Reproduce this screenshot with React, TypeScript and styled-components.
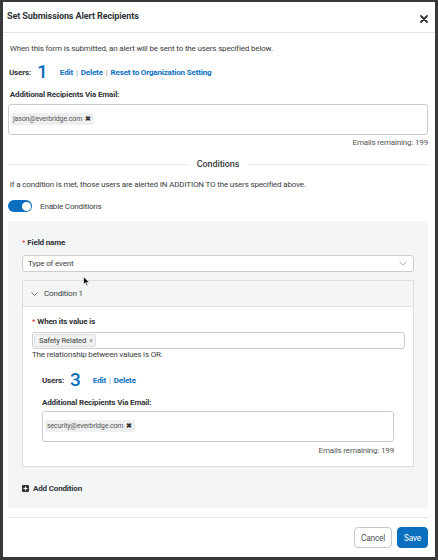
import React from "react";
import styled, { createGlobalStyle } from "styled-components";

const Global = createGlobalStyle`
  html, body { margin: 0; padding: 0; background: #fff; }
  body { font-family: Roboto, "Liberation Sans", Arial, sans-serif; color: #333; }
  * { box-sizing: border-box; }
`;

const Frame = styled.div`
  position: relative;
  width: 438px;
  height: 560px;
  border: 3px solid #37393b;
  border-top-width: 2px;
  background: #fff;
  display: flex;
  flex-direction: column;
  overflow: hidden;
`;

const Header = styled.div`
  height: 31px;
  flex: none;
  display: flex;
  align-items: center;
  justify-content: space-between;
  padding: 0 7px 0 4px;
  border-bottom: 1px solid #dfe3e6;
`;

const Title = styled.div`
  font-size: 9px;
  letter-spacing: -0.1px;
  font-weight: 700;
  color: #2f3337;
  margin-top: -2px;
`;

const Close = styled.svg`
  width: 8px;
  height: 8px;
  margin-top: 3px;
`;

const Body = styled.div`
  flex: 1;
  padding: 0 7px 0 5px;
  display: flex;
  flex-direction: column;
  font-size: 8px;
  letter-spacing: -0.16px;
`;

const Text = styled.div<{ $mt?: number; $muted?: boolean; $right?: boolean }>`
  line-height: 12px;
  height: 12px;
  white-space: nowrap;
  color: ${(p) => (p.$muted ? "#555" : "#3a3d40")};
  margin-top: ${(p) => p.$mt ?? 0}px;
  text-align: ${(p) => (p.$right ? "right" : "left")};
`;

const Label = styled.div<{ $mt?: number }>`
  line-height: 12px;
  height: 12px;
  font-weight: 700;
  color: #2f3337;
  white-space: nowrap;
  margin-top: ${(p) => p.$mt ?? 0}px;
`;

const Req = styled.span`
  color: #e0393e;
  margin-right: 2px;
  font-weight: 400;
`;

const UsersRow = styled.div<{ $mt: number; $indent?: number }>`
  height: 20px;
  display: flex;
  align-items: center;
  margin-top: ${(p) => p.$mt}px;
  padding-left: ${(p) => p.$indent ?? 0}px;
  white-space: nowrap;
`;

const UsersLabel = styled.span`
  font-weight: 700;
  color: #2f3337;
`;

const Count = styled.span`
  font-size: 19px;
  font-weight: 500;
  letter-spacing: 0;
  color: #0b6fbf;
  margin: 0 12px 0 6px;
  line-height: 20px;
`;

const Link = styled.span`
  color: #0b6fbf;
  font-weight: 700;
`;

const Sep = styled.span`
  color: #8a8f94;
  margin: 0 3px;
`;

const EmailBox = styled.div<{ $mt: number }>`
  height: 31px;
  margin-top: ${(p) => p.$mt}px;
  border: 1px solid #c9cdd1;
  border-radius: 3px;
  background: #fff;
  padding: 8px 2px;
  display: flex;
  align-items: flex-start;
`;

const Chip = styled.span`
  display: inline-flex;
  align-items: center;
  height: 12px;
  padding: 0 3px 0 2px;
  background: #eeeff0;
  border-radius: 2px;
  font-size: 7px;
  letter-spacing: -0.12px;
  color: #555;
  white-space: nowrap;
`;

const ChipX = styled.span`
  font-weight: 700;
  margin-left: 3px;
  font-size: 6.5px;
  color: #333;
`;

const Divider = styled.div`
  margin-top: 9px;
  height: 12px;
  display: flex;
  align-items: center;
  gap: 9px;
  font-size: 9px;
  letter-spacing: -0.1px;
  color: #3a3d40;
  font-weight: 500;
  &::before, &::after {
    content: "";
    flex: 1;
    height: 1px;
    background: #e6e8ea;
  }
`;

const ToggleRow = styled.div`
  margin-top: 9px;
  height: 12px;
  display: flex;
  align-items: center;
  gap: 8px;
  color: #3a3d40;
`;

const Toggle = styled.span`
  width: 24px;
  height: 12px;
  border-radius: 6px;
  background: #0b6fbf;
  position: relative;
  flex: none;
  &::after {
    content: "";
    position: absolute;
    right: 1.5px;
    top: 1.5px;
    width: 9px;
    height: 9px;
    border-radius: 50%;
    background: #fff;
  }
`;

const Panel = styled.div`
  margin-top: 9px;
  height: 287px;
  background: #f4f5f7;
  padding: 16px 14px 0 14px;
  display: flex;
  flex-direction: column;
`;

const Select = styled.div`
  margin-top: 6px;
  height: 17px;
  border: 1px solid #c9cdd1;
  border-radius: 3px;
  background: #fff;
  display: flex;
  align-items: center;
  justify-content: space-between;
  padding: 0 6px 0 5px;
  color: #3a3d40;
`;

const Card = styled.div`
  margin-top: 8px;
  border: 1px solid #dde0e3;
  background: #fff;
  display: flex;
  flex-direction: column;
`;

const CardHead = styled.div`
  height: 26px;
  background: #f4f5f7;
  border-bottom: 1px solid #dde0e3;
  display: flex;
  align-items: center;
  padding-left: 8px;
  gap: 6px;
  color: #3a3d40;
`;

const CardBody = styled.div`
  padding: 9px 8px 9px 9px;
  display: flex;
  flex-direction: column;
`;

const TagInput = styled.div`
  margin-top: 4px;
  height: 17px;
  border: 1px solid #c9cdd1;
  border-radius: 3px;
  display: flex;
  align-items: center;
  padding: 0 1px;
`;

const Tag = styled.span`
  display: inline-flex;
  align-items: center;
  height: 13px;
  padding: 0 3px 0 4px;
  background: #f1f2f3;
  border: 1px solid #dadde0;
  border-radius: 2px;
  font-size: 7.7px;
  letter-spacing: -0.15px;
  color: #3a3d40;
`;

const TagX = styled.span`
  margin-left: 3px;
  color: #777;
  font-size: 6.5px;
`;

const Indented = styled.div`
  margin: 0 11px 0 10px;
  display: flex;
  flex-direction: column;
`;

const AddRow = styled.div`
  margin-top: 15px;
  height: 12px;
  display: flex;
  align-items: center;
  gap: 4px;
  font-weight: 700;
  color: #2f3337;
`;

const Footer = styled.div`
  margin-top: 9px;
  border-top: 1px solid #e3e6e8;
  padding-top: 9px;
  display: flex;
  justify-content: flex-end;
  gap: 5px;
`;

const Button = styled.button<{ $primary?: boolean }>`
  height: 21px;
  padding: 0 6px;
  border-radius: 4px;
  font-family: Roboto, "Liberation Sans", Arial, sans-serif;
  font-size: 8.2px;
  letter-spacing: -0.15px;
  border: 1px solid ${(p) => (p.$primary ? "#0b6fbf" : "#c3c8cc")};
  background: ${(p) => (p.$primary ? "#0b6fbf" : "#fff")};
  color: ${(p) => (p.$primary ? "#fff" : "#4a4f54")};
  cursor: pointer;
`;

const Cursor = styled.svg`
  position: absolute;
  left: 80px;
  top: 274px;
  width: 7px;
  height: 11px;
  pointer-events: none;
`;

const Users = ({ n, reset, mt, indent }: { n: number; reset?: boolean; mt: number; indent?: number }) => (
  <UsersRow $mt={mt} $indent={indent}>
    <UsersLabel>Users:</UsersLabel>
    <Count>{n}</Count>
    <Link>Edit</Link>
    <Sep>|</Sep>
    <Link>Delete</Link>
    {reset && (
      <>
        <Sep>|</Sep>
        <Link>Reset to Organization Setting</Link>
      </>
    )}
  </UsersRow>
);

export default function App() {
  return (
    <>
      <Global />
      <Frame>
        <Header>
          <Title>Set Submissions Alert Recipients</Title>
          <Close viewBox="0 0 8 8">
            <path d="M1 1 L7 7 M7 1 L1 7" stroke="#2f3337" strokeWidth="1.8" strokeLinecap="round" />
          </Close>
        </Header>
        <Body>
          <Text $mt={10}>&nbsp;When this form is submitted, an alert will be sent to the users specified below.</Text>
          <Users n={1} reset mt={7} indent={1} />
          <Label $mt={7}>&nbsp;Additional Recipients Via Email:</Label>
          <EmailBox $mt={3}>
            <Chip>
              jason@everbridge.com<ChipX>✖</ChipX>
            </Chip>
          </EmailBox>
          <Text $mt={2} $right $muted>Emails remaining: 199</Text>
          <Divider>Conditions</Divider>
          <Text $mt={9}>&nbsp;If a condition is met, those users are alerted IN ADDITION TO the users specified above.</Text>
          <ToggleRow>
            <Toggle />
            Enable Conditions
          </ToggleRow>
          <Panel>
            <Label>
              <Req>*</Req>Field name
            </Label>
            <Select>
              Type of event
              <svg width="8" height="5" viewBox="0 0 8 5">
                <path d="M0.5 0.5 L4 4 L7.5 0.5" fill="none" stroke="#a0a5aa" strokeWidth="0.8" />
              </svg>
            </Select>
            <Card>
              <CardHead>
                <svg width="7" height="4" viewBox="0 0 7 4">
                  <path d="M0.5 0.5 L3.5 3.5 L6.5 0.5" fill="none" stroke="#555" strokeWidth="0.8" />
                </svg>
                Condition 1
              </CardHead>
              <CardBody>
                <Label>
                  <Req>*</Req>When its value is
                </Label>
                <TagInput>
                  <Tag>
                    Safety Related<TagX>×</TagX>
                  </Tag>
                </TagInput>
                <Text>The relationship between values is OR.</Text>
                <Indented>
                  <Users n={3} mt={9} />
                  <Label $mt={7}>Additional Recipients Via Email:</Label>
                  <EmailBox $mt={2}>
                    <Chip>
                      security@everbridge.com<ChipX>✖</ChipX>
                    </Chip>
                  </EmailBox>
                  <Text $mt={3} $right $muted>Emails remaining: 199</Text>
                </Indented>
              </CardBody>
            </Card>
            <AddRow>
              <svg width="7" height="7" viewBox="0 0 7 7">
                <rect width="7" height="7" rx="1" fill="#2f3337" />
                <path d="M3.5 1.5 V5.5 M1.5 3.5 H5.5" stroke="#fff" strokeWidth="1.1" />
              </svg>
              Add Condition
            </AddRow>
          </Panel>
          <Footer>
            <Button>Cancel</Button>
            <Button $primary>Save</Button>
          </Footer>
        </Body>
        <Cursor viewBox="0 0 7 11">
          <path d="M0.5 0.5 L0.5 8.5 L2.4 6.8 L3.8 10 L5 9.5 L3.7 6.4 L6.3 6.4 Z" fill="#111" stroke="#fff" strokeWidth="0.7" strokeLinejoin="round" />
        </Cursor>
      </Frame>
    </>
  );
}
